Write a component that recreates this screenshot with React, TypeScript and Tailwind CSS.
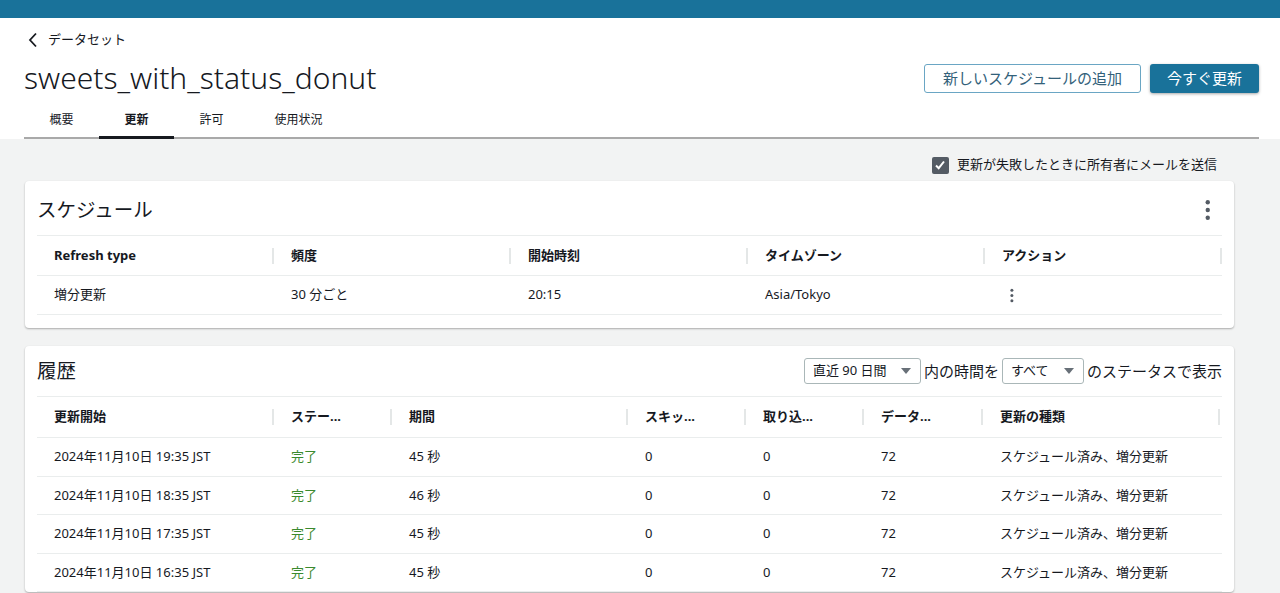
import React from 'react';

const FONT = { fontFamily: '"Noto Sans", "Noto Sans CJK JP", sans-serif' };

function Kebab({ size = 20 }: { size?: number }) {
  return (
    <svg width={size / 4} height={size} viewBox="0 0 5 20" fill="#545b64">
      <circle cx="2.5" cy="3" r="2" />
      <circle cx="2.5" cy="10" r="2" />
      <circle cx="2.5" cy="17" r="2" />
    </svg>
  );
}

function Caret() {
  return (
    <svg width="10" height="6" viewBox="0 0 10 6" fill="#687078">
      <path d="M0 0h10L5 6z" />
    </svg>
  );
}

function Sep() {
  return <span className="absolute right-0 top-1/2 -translate-y-1/2 w-[2px] h-4 bg-[#e4e7e7]" />;
}

const scheduleCols = ['Refresh type', '頻度', '開始時刻', 'タイムゾーン', 'アクション'];

const historyCols = [
  { label: '更新開始', w: 'w-[237px]' },
  { label: 'ステー...', w: 'w-[118px]' },
  { label: '期間', w: 'w-[236px]' },
  { label: 'スキッ...', w: 'w-[118px]' },
  { label: '取り込...', w: 'w-[118px]' },
  { label: 'データ...', w: 'w-[119px]' },
  { label: '更新の種類', w: 'w-[237px]' },
];

const historyRows = [
  ['2024年11月10日 19:35 JST', '完了', '45 秒', '0', '0', '72', 'スケジュール済み、増分更新'],
  ['2024年11月10日 18:35 JST', '完了', '46 秒', '0', '0', '72', 'スケジュール済み、増分更新'],
  ['2024年11月10日 17:35 JST', '完了', '45 秒', '0', '0', '72', 'スケジュール済み、増分更新'],
  ['2024年11月10日 16:35 JST', '完了', '45 秒', '0', '0', '72', 'スケジュール済み、増分更新'],
];

export default function App() {
  return (
    <div className="h-[593px] overflow-hidden bg-[#f2f3f3] text-[#16191f]" style={FONT}>
      {/* Top bar */}
      <div className="h-[18px] bg-[#19729a]" />

      {/* Header */}
      <div className="bg-white pl-6 pr-[21px]">
        <div className="pt-[13px] flex items-center gap-[10px] h-[31px] text-[13px] pl-1">
          <svg width="10" height="16" viewBox="0 0 10 16" fill="none" stroke="#16191f" strokeWidth="1.8">
            <path d="M8 1.5L2 8l6 6.5" />
          </svg>
          <span>データセット</span>
        </div>
        <div className="flex items-center justify-between mt-[9px] h-10">
          <h1 className="text-[30px] font-light leading-10">sweets_with_status_donut</h1>
          <div className="flex items-center gap-[9px] pt-px">
            <button className="h-[29px] px-[18px] border border-[#6aa6c4] rounded-[3px] text-[#33617a] text-[15px] bg-white">
              新しいスケジュールの追加
            </button>
            <button className="h-[29px] px-[17px] rounded-[3px] bg-[#19729a] text-white text-[15px] shadow-[0_1px_3px_rgba(0,0,0,0.35)]">
              今すぐ更新
            </button>
          </div>
        </div>
        <div className="flex mt-[6px] border-b-2 border-[#a9a9a9] text-[12px]">
          {['概要', '更新', '許可', '使用状況'].map((t) => (
            <div
              key={t}
              className={`h-[35px] px-[25.5px] flex items-center -mb-[2px] border-b-[3px] ${
                t === '更新' ? 'border-[#16191f] font-bold' : 'border-transparent'
              }`}
            >
              {t}
            </div>
          ))}
        </div>
      </div>

      {/* Body */}
      <div className="pl-[25px] pr-[46px]">
        <div className="flex items-center justify-end gap-2 h-[42px] pt-[10px] pr-[17px] text-[13px]">
          <span className="w-[17px] h-[17px] rounded-[2px] bg-[#545b64] flex items-center justify-center">
            <svg width="12" height="12" viewBox="0 0 12 12" fill="none" stroke="white" strokeWidth="2">
              <path d="M2 6.5l2.7 2.7L10 2.5" />
            </svg>
          </span>
          <span>更新が失敗したときに所有者にメールを送信</span>
        </div>

        {/* Schedule card */}
        <div className="bg-white rounded-[4px] shadow-[0_1px_2px_rgba(0,0,0,0.3)] px-3 pb-[13px]">
          <div className="flex items-center justify-between h-[54px] pt-[3px] pr-[12px]">
            <h2 className="text-[19.5px] font-normal">スケジュール</h2>
            <Kebab size={22} />
          </div>
          <div className="border-t border-[#eaeded]">
            <div className="flex h-[40px] border-b border-[#eaeded] text-[13px] font-bold">
              {scheduleCols.map((c) => (
                <div key={c} className="relative w-[237px] flex items-center pl-[17px]">
                  {c}
                  <Sep />
                </div>
              ))}
            </div>
            <div className="flex h-[39px] border-b border-[#eaeded] text-[13px]">
              <div className="w-[237px] flex items-center pl-[17px]">増分更新</div>
              <div className="w-[237px] flex items-center pl-[17px]">30 分ごと</div>
              <div className="w-[237px] flex items-center pl-[17px]">20:15</div>
              <div className="w-[237px] flex items-center pl-[17px]">Asia/Tokyo</div>
              <div className="w-[237px] flex items-center pl-[25px]">
                <Kebab size={15} />
              </div>
            </div>
          </div>
        </div>

        {/* History card */}
        <div className="mt-[18px] bg-white rounded-[4px] shadow-[0_1px_2px_rgba(0,0,0,0.3)] px-3">
          <div className="flex items-center justify-between h-[50px]">
            <h2 className="text-[19.5px] font-normal">履歴</h2>
            <div className="flex items-center gap-[3px] text-[15px]">
              <div className="h-[26px] w-[117px] border border-[#aab7b8] rounded-[3px] flex items-center justify-between pl-[8px] pr-[9px] text-[13px]">
                <span>直近 90 日間</span>
                <Caret />
              </div>
              <span>内の時間を</span>
              <div className="h-[26px] w-[82px] border border-[#aab7b8] rounded-[3px] flex items-center justify-between pl-[8px] pr-[9px] text-[13px]">
                <span>すべて</span>
                <Caret />
              </div>
              <span>のステータスで表示</span>
            </div>
          </div>
          <div className="border-t border-[#eaeded]">
            <div className="flex h-[41px] border-b border-[#eaeded] text-[13px] font-bold">
              {historyCols.map((c) => (
                <div key={c.label} className={`relative ${c.w} flex items-center pl-[17px]`}>
                  {c.label}
                  <Sep />
                </div>
              ))}
            </div>
            {historyRows.map((r, i) => (
              <div key={i} className="flex h-[38.5px] border-b border-[#eaeded] text-[13px]">
                {r.map((v, j) => (
                  <div
                    key={j}
                    className={`${historyCols[j].w} flex items-center pl-[17px] ${j === 1 ? 'text-[#3b8a2e]' : ''}`}
                  >
                    {v}
                  </div>
                ))}
              </div>
            ))}
          </div>
        </div>
      </div>
    </div>
  );
}
